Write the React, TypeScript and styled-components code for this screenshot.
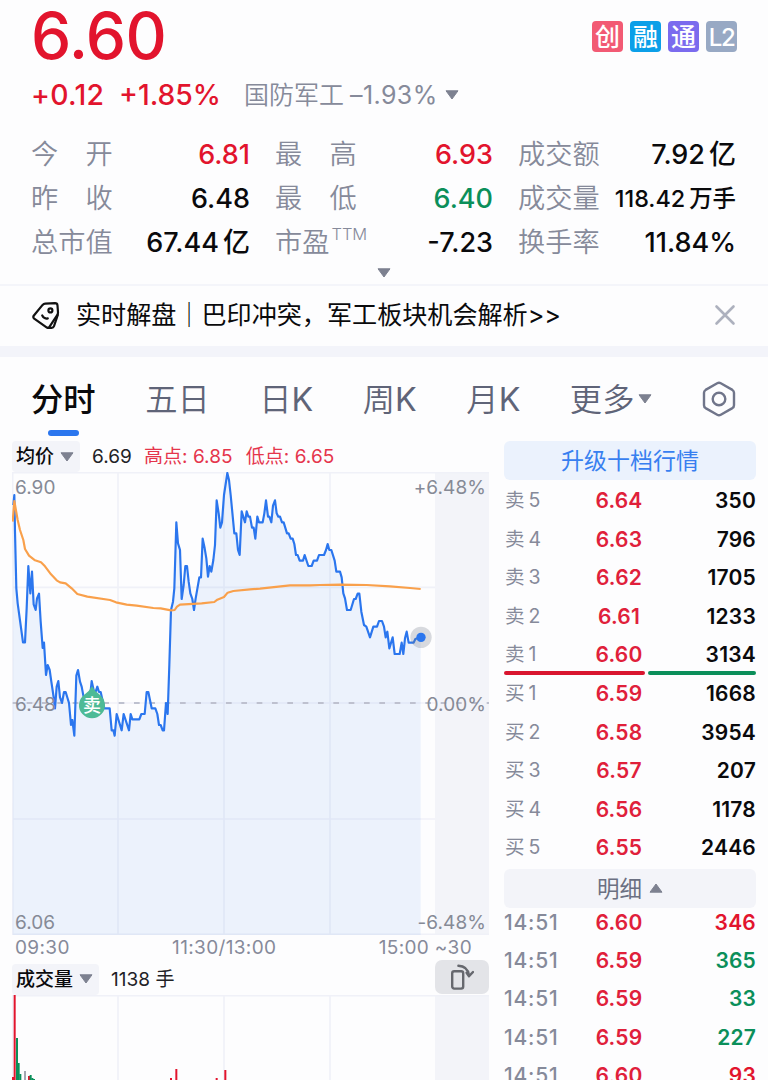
import React from 'react';
import styled, { createGlobalStyle } from 'styled-components';

const RED = '#e2142d';
const GREEN = '#0b8f5a';
const INK = '#0a0a0c';
const MUTED = '#868a9a';
const BLUE = '#2b76ee';

const GlobalStyle = createGlobalStyle`
  * { box-sizing: border-box; }
  html, body { margin: 0; padding: 0; background: #fdfdfe; }
  body { font-family: Inter, 'Noto Sans CJK SC', sans-serif; color: ${INK}; }
`;

const Screen = styled.div`
  width: 768px;
  height: 1080px;
  overflow: hidden;
  background: #fdfdfe;
  display: flex;
  flex-direction: column;
  white-space: nowrap;
`;

/* ---------- quote header ---------- */

const Quote = styled.header`
  height: 286px;
  padding: 0 32px 0 31px;
  border-bottom: 2px solid #f4f5fa;
  display: flex;
  flex-direction: column;
`;

const PriceRow = styled.div`
  height: 72px;
  display: flex;
  align-items: center;
  justify-content: space-between;
`;

const Price = styled.div`
  font-size: 64px;
  line-height: 72px;
  font-weight: 450;
  letter-spacing: -0.6px;
  color: ${RED};
`;

const Tags = styled.div`
  display: flex;
  gap: 7px;
  margin-right: -1px;
`;

const Tag = styled.span<{ $bg: string; $latin?: boolean }>`
  width: 31px;
  height: 31px;
  border-radius: 4px;
  background: ${(p) => p.$bg};
  color: #fff;
  font-size: ${(p) => (p.$latin ? 24 : 25)}px;
  font-weight: 500;
  letter-spacing: ${(p) => (p.$latin ? '-1.5px' : '0')};
  line-height: ${(p) => (p.$latin ? 33 : 32)}px;
  display: flex;
  justify-content: center;
`;

const ChangeRow = styled.div`
  height: 46px;
  display: flex;
  align-items: center;
  line-height: 48px;
  color: ${RED};
  font-size: 28.3px;
  font-weight: 450;
`;

const Change = styled.span`
  width: 89px;
  letter-spacing: 0.3px;
`;

const Percent = styled.span`
  width: 124px;
  margin-left: -1px;
  margin-right: 1px;
`;

const Sector = styled.span`
  display: flex;
  align-items: center;
  color: ${MUTED};
  font-size: 25px;
  line-height: 48px;
  font-weight: 350;
`;

const SectorChange = styled.span`
  margin: 0 7px 0 6px;
  font-weight: 400;
  letter-spacing: 0.4px;
`;

const Stats = styled.div`
  margin-top: 14px;
  display: grid;
  grid-template-columns: 219px 218px 218px;
  column-gap: 25px;
  grid-auto-rows: 44px;
`;

const Stat = styled.div`
  display: flex;
  justify-content: space-between;
  height: 44px;
  line-height: 45px;
`;

const StatLabel = styled.span`
  font-size: 27.2px;
  line-height: 46px;
  font-weight: 350;
  color: ${MUTED};
  display: flex;
`;

const Sup = styled.span`
  font-size: 16.5px;
  line-height: 28px;
  margin-left: 2px;
`;

const StatValue = styled.span<{ $color?: string; $small?: boolean }>`
  font-size: ${(p) => (p.$small ? 23.4 : 27)}px;
  font-weight: 500;
  color: ${(p) => p.$color ?? INK};
`;

const Unit = styled.span`
  margin-left: 4px;
`;

const Expander = styled.div`
  display: flex;
  justify-content: center;
  padding-top: 4px;
`;

/* ---------- news strip ---------- */

const News = styled.section`
  height: 60px;
  padding: 0 32px 2px 31px;
  display: flex;
  align-items: center;
`;

const NewsText = styled.span`
  flex: 1;
  margin-left: 16px;
  font-size: 25.1px;
  line-height: 60px;
`;

const Band = styled.div`
  height: 11px;
  background: #f3f4fa;
`;

/* ---------- tabs ---------- */

const Tabs = styled.nav`
  height: 84px;
  padding: 0 32px 0 31px;
  display: flex;
  justify-content: space-between;
`;

const Tab = styled.div<{ $active?: boolean }>`
  height: 84px;
  display: flex;
  flex-direction: column;
  align-items: center;
  font-size: 32.3px;
  line-height: 85px;
  font-weight: ${(p) => (p.$active ? 500 : 350)};
  color: ${(p) => (p.$active ? INK : '#5f6478')};
`;

const TabLine = styled.i`
  flex: none;
  margin-top: -12px;
  width: 31px;
  height: 6px;
  border-radius: 3px;
  background: ${BLUE};
`;

const CycleTab = styled(Tab)`
  flex-direction: row;
`;

const CycleLetter = styled.span`
  font-weight: 400;
`;

const MoreTab = styled(Tab)`
  flex-direction: row;
  gap: 4px;
`;

const TabIcon = styled.div`
  height: 84px;
  display: flex;
  align-items: center;
`;

/* ---------- body ---------- */

const Body = styled.main`
  flex: 1;
  min-height: 0;
  padding: 0 12px;
  display: flex;
  gap: 15px;
`;

const ChartColumn = styled.section`
  width: 477px;
  flex: none;
`;

const Legend = styled.div`
  height: 31px;
  display: flex;
  align-items: center;
  font-size: 19px;
  line-height: 31px;
`;

const Picker = styled.span<{ $width: number }>`
  width: ${(p) => p.$width}px;
  height: 31px;
  padding: 0 6px 0 4px;
  border-radius: 4px;
  background: #f3f4f9;
  display: flex;
  align-items: center;
  justify-content: space-between;
  font-weight: 500;
`;

const LegendValue = styled.span<{ $color?: string; $gap: number }>`
  margin-left: ${(p) => p.$gap}px;
  letter-spacing: 0.05px;
  color: ${(p) => p.$color ?? '#222226'};
`;

const TimeAxis = styled.div`
  height: 28px;
  padding: 0 17px 0 3px;
  display: flex;
  justify-content: space-between;
  font-size: 19px;
  line-height: 25px;
  letter-spacing: 0.35px;
  color: ${MUTED};
`;

const VolumeHead = styled(Legend)`
  height: 32px;
`;

const RotateButton = styled.button`
  width: 54px;
  height: 34px;
  margin: -4px 0 0 auto;
  padding: 0;
  border: 0;
  border-radius: 7px;
  background: #e3e4e8;
  display: flex;
  align-items: center;
  justify-content: center;
`;

const Plot = styled.svg`
  display: block;
  font-family: Inter, 'Noto Sans CJK SC', sans-serif;
`;

/* ---------- order book ---------- */

const Book = styled.aside`
  width: 252px;
  flex: none;
`;

const Upgrade = styled.div`
  height: 39px;
  margin-bottom: 1px;
  border-radius: 6px;
  background: #ebf2fd;
  color: #387ff0;
  font-size: 23px;
  line-height: 40px;
  text-align: center;
`;

const BookRow = styled.div<{ $height: number }>`
  height: ${(p) => p.$height}px;
  line-height: ${(p) => p.$height + 1}px;
  display: grid;
  grid-template-columns: 73px 84px 1fr;
  font-size: 21px;
`;

const Level = styled.span`
  padding-left: 1px;
  color: ${MUTED};
  font-size: 19.5px;
  font-weight: 400;
  word-spacing: -1.5px;
`;

const TradeTime = styled.span`
  color: ${MUTED};
  font-weight: 450;
  letter-spacing: 0.8px;
`;

const BookPrice = styled.span`
  color: #e0203a;
  font-weight: 600;
  text-align: center;
  letter-spacing: 0.2px;
`;

const Amount = styled.span<{ $color?: string }>`
  color: ${(p) => p.$color ?? INK};
  font-weight: 600;
  text-align: right;
  letter-spacing: 0.2px;
`;

const Ratio = styled.div`
  height: 4px;
  margin: -3px 0 -1px;
  display: flex;
  gap: 3px;
`;

const RatioPart = styled.i<{ $color: string; $grow: number }>`
  flex: ${(p) => p.$grow};
  border-radius: 2px;
  background: ${(p) => p.$color};
`;

const DetailToggle = styled.div`
  height: 39px;
  margin: 2px 0 -5px;
  border-radius: 6px;
  background: #f3f4f9;
  display: flex;
  align-items: center;
  justify-content: center;
  gap: 7px;
  font-size: 22.5px;
  line-height: 39px;
  color: #6b7082;
`;

/* ---------- small drawings ---------- */

const Triangle = ({ w = 14, h = 10, up = false, color = '#7d8190' }) => (
  <svg width={w} height={h} viewBox="0 0 14 10" preserveAspectRatio="none">
    <path
      d={up ? 'M1 9.2 L7 1 L13 9.2 Z' : 'M1 0.8 L13 0.8 L7 9 Z'}
      fill={color}
      stroke={color}
      strokeWidth="1"
      strokeLinejoin="round"
    />
  </svg>
);

const TagIcon = () => (
  <svg width="29" height="29" viewBox="0 0 29 29" fill="none" stroke="#111" strokeWidth="2.2" strokeLinejoin="round" strokeLinecap="round">
    <path d="M14.2 2.6 L24 2.2 Q26.3 2.2 26.5 4.5 L27 11.5 Q27 13 26.2 14.2 L18.6 25.6 Q17.2 27.6 15.2 26.2 L3.2 17.6 Q1.6 16.2 2.9 14.5 L11.6 3.9 Q12.7 2.7 14.2 2.6 Z" />
    <path d="M26.8 14 L23 25.2 Q22.4 26.8 20.6 26.8 L17 26.8" />
    <circle cx="19.4" cy="9.4" r="2" />
    <path d="M11.2 14.4 Q12.8 18.2 16.8 17.4" />
  </svg>
);

const CloseIcon = () => (
  <svg width="22" height="22" viewBox="0 0 22 22" stroke="#adb1be" strokeWidth="2.6" strokeLinecap="round">
    <path d="M2.5 2.5 L19.5 19.5 M19.5 2.5 L2.5 19.5" />
  </svg>
);

const SettingsIcon = () => (
  <svg width="34" height="36" viewBox="0 0 34 36" fill="none" stroke="#70758a" strokeWidth="2.4" strokeLinejoin="round">
    <path d="M15.2 2.2 Q17 1.2 18.8 2.2 L30.4 8.9 Q32 9.9 32 11.8 L32 24.2 Q32 26.1 30.4 27.1 L18.8 33.8 Q17 34.8 15.2 33.8 L3.6 27.1 Q2 26.1 2 24.2 L2 11.8 Q2 9.9 3.6 8.9 Z" />
    <circle cx="17" cy="18" r="6.3" />
  </svg>
);

const RotateIcon = () => (
  <svg width="24" height="26" viewBox="0 0 24 26" fill="none" stroke="#66686e" strokeWidth="2.4" strokeLinecap="round" strokeLinejoin="round">
    <rect x="2.2" y="7.2" width="11" height="17.4" rx="2" />
    <path d="M8.4 1.8 Q17.6 2.2 19 11.4" />
    <path d="M16.6 8.8 L19 12.2 L23 8" />
  </svg>
);

/* ---------- chart data (three plot units per pixel) ---------- */

type Pt = [number, number];
const shift = (dx: number, pts: Pt[]): Pt[] => pts.map(([x, y]) => [x + dx, y]);

const PRICE: Pt[] = [
  ...shift(0, [
    [40, 120], [43, 90], [45, 200], [49, 370], [53, 415], [69, 532], [75, 532], [80, 430], [85, 303], [91, 385], [96, 320],
    [101, 418], [107, 435], [111, 400], [117, 386], [122, 470], [128, 549], [132, 533], [138, 630], [143, 600],
    [149, 615], [154, 650], [160, 690], [165, 730], [170, 665], [175, 648], [180, 697], [186, 714], [192, 681], [197, 681],
    [207, 714], [213, 780], [217, 765], [223, 812], [229, 632], [234, 615], [240, 650], [245, 665], [251, 697],
    [270, 697], [275, 648], [282, 680], [287, 680], [292, 665], [297, 681], [302, 681], [313, 730], [329, 730],
    [335, 796], [340, 796], [344, 812], [350, 747], [365, 796], [371, 747], [387, 796], [392, 747], [397, 763],
    [418, 763], [424, 747], [434, 747], [440, 681], [445, 681], [455, 730], [466, 730], [472, 747], [477, 780],
    [482, 780], [488, 796], [492, 796], [498, 714], [503, 747], [508, 600], [513, 435], [519, 410], [523, 370],
    [529, 172], [534, 235], [540, 255], [545, 402], [551, 360], [556, 303], [561, 303], [566, 350], [571, 385],
    [577, 402], [582, 435], [587, 400], [598, 337], [603, 337], [608, 221], [614, 250], [619, 280], [624, 335],
    [629, 303], [634, 320], [640, 285], [645, 240], [650, 106], [656, 145], [661, 188], [666, 172], [672, 90],
    [682, 24], [687, 45], [692, 90], [703, 205], [709, 205], [714, 255], [719, 270],
  ]),
  ...shift(450, [
    [275, 139], [285, 172], [290, 139], [295, 155], [300, 155], [306, 188], [311, 188], [316, 221], [322, 155],
    [327, 172], [338, 172], [343, 145], [348, 106], [354, 155], [358, 155], [364, 172], [369, 122], [375, 106],
    [380, 145], [385, 155], [390, 155], [396, 172], [401, 172], [411, 205], [416, 205], [422, 221], [428, 221],
    [433, 237], [438, 270], [443, 270], [449, 287], [459, 287],
  ]),
  ...shift(900, [
    [14, 270], [25, 303], [35, 303], [41, 287], [51, 287], [57, 270], [72, 270], [78, 255], [83, 237], [88, 255],
    [94, 255], [104, 287], [109, 320], [120, 320], [125, 337], [130, 385], [135, 400], [141, 435], [152, 435],
    [162, 402], [167, 402], [173, 386], [178, 386], [184, 440], [192, 480], [199, 485], [210, 517], [220, 485],
    [231, 485], [237, 468], [246, 468], [252, 485], [257, 517], [262, 500], [268, 550], [278, 517], [284, 567],
    [299, 567], [305, 533], [310, 567], [315, 520], [320, 500], [326, 533], [341, 533], [346, 522], [362, 517],
  ]),
];

const AVERAGE: Pt[] = [
  [38, 170], [43, 108], [53, 165], [60, 195], [70, 225], [75, 252], [87, 272], [105, 286], [123, 292], [135, 304],
  [153, 328], [170, 346], [180, 352], [197, 355], [215, 370], [232, 387], [262, 395], [330, 405], [348, 412],
  [380, 419], [410, 422], [460, 429], [482, 430], [513, 436], [524, 435], [531, 425], [540, 419], [605, 415],
  [643, 411], [652, 404], [672, 396], [683, 383], [700, 378], [750, 373], [780, 371], [870, 361], [930, 361],
  [960, 360], [1020, 359], [1100, 360], [1170, 364], [1230, 369], [1262, 372],
];

const join = (pts: Pt[]) => pts.map((p) => p.join(',')).join(' ');
const GRID_X = [354, 672, 990];

const PriceChart = () => (
  <Plot width="477" height="463" viewBox="36 21 1431 1389" preserveAspectRatio="none">
    <rect x="1305" y="21" width="162" height="1389" fill="#f3f4f9" />
    <g stroke="#f0f1f8" strokeWidth="5">
      {GRID_X.map((x) => <line key={x} x1={x} x2={x} y1="21" y2="1410" />)}
      {[367, 714, 1062].map((y) => <line key={y} x1="36" x2="1305" y1={y} y2={y} />)}
      <path d="M1467 23 H38 V1408 H1467" fill="none" />
    </g>
    <polygon points={`38,1410 ${join(PRICE)} 1262,1410`} fill="rgba(65,135,235,0.092)" />
    <line x1="38" x2="1467" y1="714" y2="714" stroke="#bec1cf" strokeWidth="6" strokeDasharray="17 29" strokeDashoffset="4" />
    <polyline points={join(PRICE)} fill="none" stroke={BLUE} strokeWidth="6.5" strokeLinejoin="round" />
    <polyline points={join(AVERAGE)} fill="none" stroke="#f9a04b" strokeWidth="6.5" strokeLinejoin="round" />
    <circle cx="1263" cy="517" r="32" fill="rgba(110,115,130,0.26)" />
    <circle cx="1263" cy="517" r="14" fill={BLUE} />
    <path d="M276 664 Q283 678 300 690 A39 39 0 1 1 252 690 Q269 678 276 664 Z" fill="#4dba96" />
    <text x="276" y="741" fontSize="54" fontWeight="500" fill="#fff" textAnchor="middle">卖</text>
    <g fill="#868a96" fontSize="57" letterSpacing="0.2">
      <text x="45" y="86">6.90</text>
      <text x="45" y="737">6.48</text>
      <text x="45" y="1392">6.06</text>
      <text x="1458" y="86" textAnchor="end">+6.48%</text>
      <text x="1458" y="737" textAnchor="end">0.00%</text>
      <text x="1458" y="1392" textAnchor="end">-6.48%</text>
    </g>
  </Plot>
);

const VOLUME: [number, number, string][] = [
  [36, 3, RED], [41, 85, RED], [48, 42, GREEN], [53, 17, GREEN], [58, 6, GREEN], [72, 9, '#a3a6b0'],
  [84, 4, RED], [89, 5, GREEN], [94, 2, GREEN], [99, 1, GREEN], [510, 2, RED], [526, 11, RED], [647, 2, RED], [673, 10, RED],
];

const VolumeChart = () => (
  <Plot width="477" height="85" viewBox="36 0 1431 255">
    <rect x="1305" y="0" width="162" height="255" fill="#f3f4f9" />
    <g stroke="#f0f1f8" strokeWidth="5">
      <line x1="36" x2="1467" y1="2" y2="2" />
      <line x1="38" x2="38" y1="0" y2="255" />
      {GRID_X.map((x) => <line key={x} x1={x} x2={x} y1="0" y2="255" />)}
    </g>
    {VOLUME.map(([x, h, color]) => (
      <rect key={x} x={x} y={255 - h * 3} width="6" height={h * 3} fill={color} />
    ))}
  </Plot>
);

/* ---------- content ---------- */

const SELLS = [['卖 5', '6.64', '350'], ['卖 4', '6.63', '796'], ['卖 3', '6.62', '1705'], ['卖 2', '6.61', '1233'], ['卖 1', '6.60', '3134']];
const BUYS = [['买 1', '6.59', '1668'], ['买 2', '6.58', '3954'], ['买 3', '6.57', '207'], ['买 4', '6.56', '1178'], ['买 5', '6.55', '2446']];
const TRADES = [['6.60', '346', RED], ['6.59', '365', GREEN], ['6.59', '33', GREEN], ['6.59', '227', GREEN], ['6.60', '93', RED]];

const Levels = ({ rows }: { rows: string[][] }) => (
  <>
    {rows.map(([level, price, amount]) => (
      <BookRow key={level} $height={38.6}>
        <Level>{level}</Level>
        <BookPrice>{price}</BookPrice>
        <Amount>{amount}</Amount>
      </BookRow>
    ))}
  </>
);

export default function App() {
  return (
    <Screen>
      <GlobalStyle />
      <Quote>
        <PriceRow>
          <Price>6.60</Price>
          <Tags>
            <Tag $bg="#f25a74">创</Tag>
            <Tag $bg="#0c9fe8">融</Tag>
            <Tag $bg="#7b6bee">通</Tag>
            <Tag $bg="#98a9c4" $latin>L2</Tag>
          </Tags>
        </PriceRow>
        <ChangeRow>
          <Change>+0.12</Change>
          <Percent>+1.85%</Percent>
          <Sector>
            国防军工
            <SectorChange>–1.93%</SectorChange>
            <Triangle />
          </Sector>
        </ChangeRow>
        <Stats>
          <Stat><StatLabel>今　开</StatLabel><StatValue $color={RED}>6.81</StatValue></Stat>
          <Stat><StatLabel>最　高</StatLabel><StatValue $color={RED}>6.93</StatValue></Stat>
          <Stat><StatLabel>成交额</StatLabel><StatValue>7.92<Unit>亿</Unit></StatValue></Stat>
          <Stat><StatLabel>昨　收</StatLabel><StatValue>6.48</StatValue></Stat>
          <Stat><StatLabel>最　低</StatLabel><StatValue $color={GREEN}>6.40</StatValue></Stat>
          <Stat><StatLabel>成交量</StatLabel><StatValue $small>118.42<Unit>万手</Unit></StatValue></Stat>
          <Stat><StatLabel>总市值</StatLabel><StatValue>67.44<Unit>亿</Unit></StatValue></Stat>
          <Stat><StatLabel>市盈<Sup>TTM</Sup></StatLabel><StatValue>-7.23</StatValue></Stat>
          <Stat><StatLabel>换手率</StatLabel><StatValue>11.84%</StatValue></Stat>
        </Stats>
        <Expander><Triangle /></Expander>
      </Quote>
      <News>
        <TagIcon />
        <NewsText>实时解盘｜巴印冲突，军工板块机会解析&gt;&gt;</NewsText>
        <CloseIcon />
      </News>
      <Band />
      <Tabs>
        <Tab $active>分时<TabLine /></Tab>
        <Tab>五日</Tab>
        <CycleTab>日<CycleLetter>K</CycleLetter></CycleTab>
        <CycleTab>周<CycleLetter>K</CycleLetter></CycleTab>
        <CycleTab>月<CycleLetter>K</CycleLetter></CycleTab>
        <MoreTab>更多<Triangle /></MoreTab>
        <TabIcon><SettingsIcon /></TabIcon>
      </Tabs>
      <Body>
        <ChartColumn>
          <Legend>
            <Picker $width={68}>均价<Triangle /></Picker>
            <LegendValue $gap={12}>6.69</LegendValue>
            <LegendValue $gap={12} $color="#e5354c">高点: 6.85</LegendValue>
            <LegendValue $gap={13} $color="#e5354c">低点: 6.65</LegendValue>
          </Legend>
          <PriceChart />
          <TimeAxis>
            <span>09:30</span>
            <span>11:30/13:00</span>
            <span>15:00 ~30</span>
          </TimeAxis>
          <VolumeHead>
            <Picker $width={87}>成交量<Triangle /></Picker>
            <LegendValue $gap={12}>1138 手</LegendValue>
            <RotateButton><RotateIcon /></RotateButton>
          </VolumeHead>
          <VolumeChart />
        </ChartColumn>
        <Book>
          <Upgrade>升级十档行情</Upgrade>
          <Levels rows={SELLS} />
          <Ratio>
            <RatioPart $color="#d9152f" $grow={140} />
            <RatioPart $color={GREEN} $grow={108} />
          </Ratio>
          <Levels rows={BUYS} />
          <DetailToggle>明细<Triangle up /></DetailToggle>
          {TRADES.map(([price, amount, color], i) => (
            <BookRow key={i} $height={38.2}>
              <TradeTime>14:51</TradeTime>
              <BookPrice>{price}</BookPrice>
              <Amount $color={color}>{amount}</Amount>
            </BookRow>
          ))}
        </Book>
      </Body>
    </Screen>
  );
}
